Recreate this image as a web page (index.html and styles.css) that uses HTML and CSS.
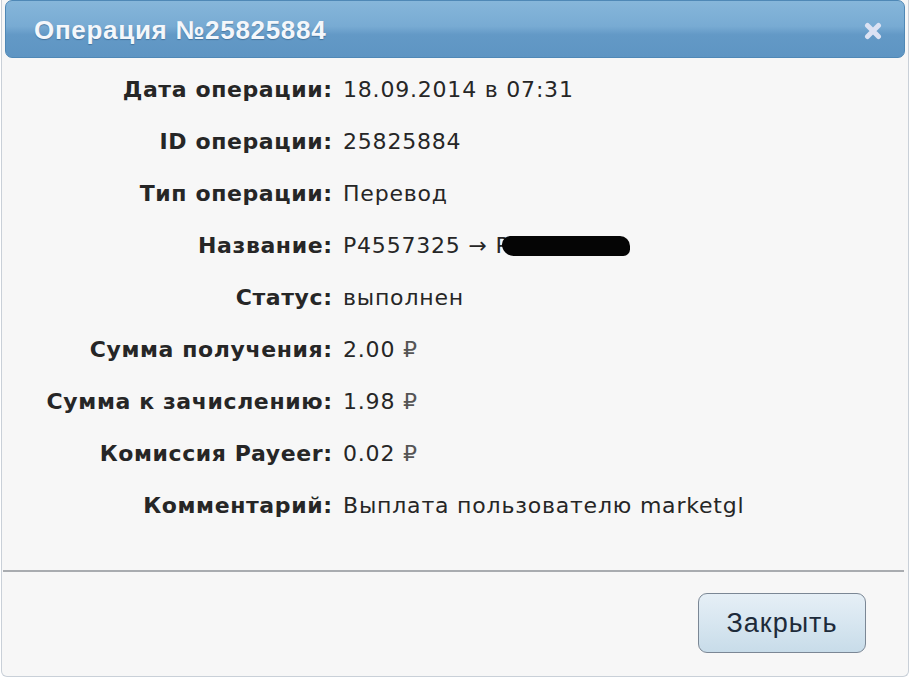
FILE: index.html
```html
<!DOCTYPE html>
<html lang="ru">
<head>
<meta charset="utf-8">
<title>Операция №25825884</title>
<link rel="stylesheet" href="styles.css">
</head>
<body>
<div class="dialog">
  <div class="header">
    <span class="title">Операция №25825884</span>
    <svg class="close" width="18" height="18" viewBox="0 0 18 18" aria-label="close">
      <path d="M3.5 3.5 L14.5 14.5 M14.5 3.5 L3.5 14.5" stroke="#dce2f3" stroke-width="5" stroke-linecap="round"/>
    </svg>
  </div>
  <div class="content">
    <div class="label">Дата операции:</div><div class="value">18.09.2014 в 07:31</div>
    <div class="label">ID операции:</div><div class="value">25825884</div>
    <div class="label">Тип операции:</div><div class="value">Перевод</div>
    <div class="label">Название:</div><div class="value">P4557325 → <span class="redact">R<span class="blot"></span></span></div>
    <div class="label">Статус:</div><div class="value">выполнен</div>
    <div class="label">Сумма получения:</div><div class="value">2.00 <span class="rub">₽</span></div>
    <div class="label">Сумма к зачислению:</div><div class="value">1.98 <span class="rub">₽</span></div>
    <div class="label">Комиссия Payeer:</div><div class="value">0.02 <span class="rub">₽</span></div>
    <div class="label">Комментарий:</div><div class="value">Выплата пользователю marketgl</div>
  </div>
  <div class="footer">
    <button class="btn"><span class="btn-text">Закрыть</span></button>
  </div>
</div>
</body>
</html>
```
FILE: styles.css
```css
html, body {
  margin: 0;
  padding: 0;
  background: #ffffff;
}
.dialog {
  box-sizing: border-box;
  width: 908px;
  height: 677px;
  margin-left: 1px;
  padding: 0 3px;
  background: #f7f7f7;
  border: 1px solid #c9d0d8;
  border-top: none;
  border-radius: 0 0 6px 6px;
  display: flex;
  flex-direction: column;
}
.header {
  box-sizing: border-box;
  height: 58px;
  border: 1px solid #4f88b6;
  border-radius: 7px;
  background: linear-gradient(to bottom, #86b6da 0%, #78abd3 45%, #6399c6 60%, #5e95c3 100%);
  display: flex;
  align-items: center;
  justify-content: space-between;
  padding: 0 22px 0 28px;
}
.title {
  font-family: "Liberation Sans", Arial, sans-serif;
  font-weight: bold;
  font-size: 26px;
  letter-spacing: 0.7px;
  color: #f4f7fb;
  text-shadow: 0 1px 1px rgba(40, 80, 120, 0.5);
  padding-top: 2px;
}
.close {
  margin-top: 4px;
}
.content {
  display: grid;
  grid-template-columns: 327px auto;
  grid-auto-rows: 52px;
  column-gap: 11px;
  align-items: center;
  padding-top: 5px;
  font-family: "DejaVu Sans", Verdana, sans-serif;
  font-size: 22px;
  color: #1a1a1a;
}
.label {
  text-align: right;
  font-weight: bold;
  letter-spacing: 0.6px;
  margin-right: -0.6px;
  color: #262626;
}
.value {
  font-weight: normal;
  color: #262626;
  letter-spacing: 0.8px;
}
.rub {
  color: #555;
}
.blot {
  display: inline-block;
  width: 128px;
  height: 20px;
  vertical-align: -3px;
  margin-left: -10px;
  background: #050505;
  border-radius: 10px 12px 8px 14px;
}
.footer {
  margin-top: auto;
  border-top: 2px solid #a9acb0;
  height: 106px;
  box-sizing: border-box;
  display: flex;
  justify-content: flex-end;
  align-items: flex-start;
  padding: 21px 38px 0 0;
  margin-left: -2px;
  margin-right: 1px;
}
.btn {
  width: 168px;
  height: 60px;
  border: 1px solid #7b8795;
  border-radius: 9px;
  background: linear-gradient(to bottom, #e6eff6 0%, #d7e6f0 50%, #c8dce9 100%);
  cursor: pointer;
  padding: 0;
}
.btn-text {
  display: inline-block;
  font-family: "Liberation Sans", Arial, sans-serif;
  font-size: 27px;
  letter-spacing: 1px;
  color: #1d2b3a;
}
```
